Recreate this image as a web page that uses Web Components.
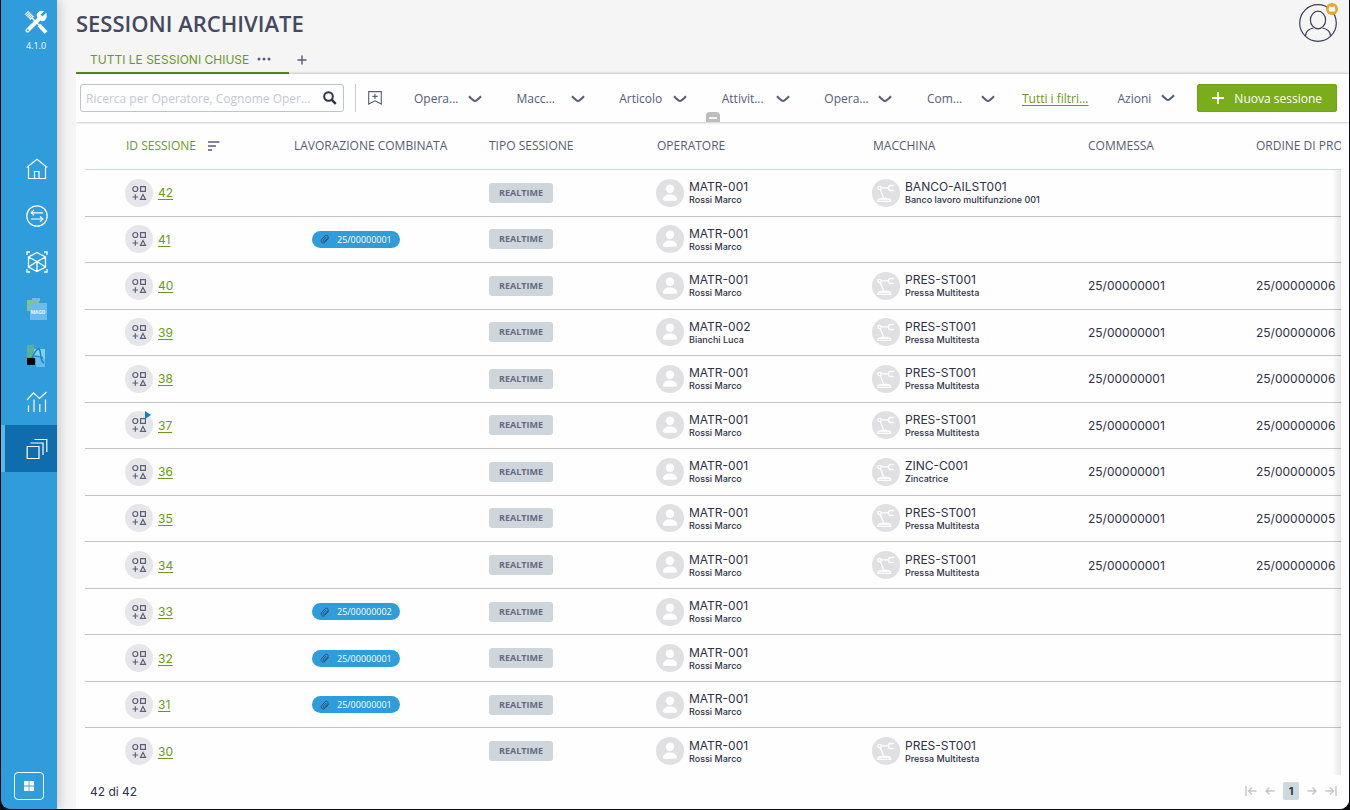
<!DOCTYPE html>
<html lang="it">
<head>
<meta charset="utf-8">
<title>Sessioni archiviate</title>
<style>
  html, body { margin: 0; height: 100%; background: #0c0c10; }
  body { font-family: "Open Sans", "Noto Sans", sans-serif; font-size: 12px; color: #4b5068;
    --green: #6a9a1b; --ink: #2e3147; --slate: #565c78; --blue: #2f9cdb; }
</style>
</head>
<body>
<session-app></session-app>
<script>
const ICONS = {
  tools: ['0 0 24 24', '<g fill="none" stroke="#fff"><path d="M3.5 20.5 15 9" stroke-width="4" stroke-linecap="round"/><path d="M22 3.5 18.5 7 16 4.500 19.500 1.500C14 .5 12.500 4 13.500 7L17 10.500c3 1 6-1 5-7z" fill="#fff" stroke-width="1"/><path d="M2.500 2.500l6 6" stroke-width="5" stroke-dasharray="1.200 .5"/><path d="M8 8l8 8" stroke-width="1.600"/><path d="M15 15l7 7.500" stroke-width="4"/></g><circle cx="3.800" cy="20.200" r="1" fill="#2f9cdb"/>'],
  home: ['0 0 22 22', '<path d="M.8 9.500 11 1.200 21.200 9.500M2.500 8.500V20.500H19.500V8.500M8.500 20.500V13.500H13V20.500" fill="none" stroke="#fff" stroke-width="1.200"/>'],
  swap: ['0 0 22 22', '<g fill="none" stroke="#fff" stroke-width="1.200"><circle cx="11" cy="11" r="10.200"/><path d="M17 7.800H5M8 5 5 7.800M5 7.800l3 2.500M5 14h12M14 11.500l3 2.500-3 2.800"/></g>'],
  cube: ['0 0 22 22', '<g fill="none" stroke="#fff" stroke-width="1.300"><path d="M1 4V1h3M18 1h3v3M1 18v3h3M18 21h3v-3M11 1.500 19.500 6V16L11 20.500 2.500 16V6ZM2.500 6 11 10.500 19.500 6M11 10.500V20.500M2.500 16 11 10.500 19.500 16"/></g>'],
  stack: ['0 0 22 22', '<g fill="none" stroke="#fff" stroke-width="1.200"><path d="M1.200 8.500H13V20.500H1.200ZM4.500 5H17V17M8.500 1.500H20.800V14"/></g>'],
  chart: ['0 0 22 22', '<path d="M1 9 7.500 1.800 13.500 7.500 20.500 1M2.500 14.500V21M8 8.500V21M13.800 13V21M19.500 8.500V21" fill="none" stroke="#fff" stroke-width="1.200"/>'],
  aLogo: ['0 0 22 22', '<path d="M1 0h7v12H1z" fill="#5fae9b"/><path d="M8 4h11v9H8z" fill="#7cd2ef"/><path d="M10 13h9v9h-9z" fill="#63bdea"/><path d="M4 14C8 13 8 4 13 4c3 3 0 11 5 14M8 11.500c3-1 6 1 9 1" fill="none" stroke="#2a7fc4" stroke-width="1.500"/><path d="M1 13h8v7H1z" fill="#000"/>'],
  win: ['0 0 10 10', '<path d="M0 0h4.600v4.600H0zM5.400 0H10v4.600H5.400zM0 5.400h4.600V10H0zM5.400 5.400H10V10H5.400z" fill="#fff"/>'],
  dots: ['0 0 14 4', '<g fill="#5a5f7c"><circle cx="2" cy="2" r="1.500"/><circle cx="7" cy="2" r="1.500"/><circle cx="12" cy="2" r="1.500"/></g>'],
  plus: ['0 0 10 10', '<path d="M5 .5v9M.5 5h9" stroke="currentColor" stroke-width="1.400" fill="none"/>'],
  add: ['0 0 12 12', '<path d="M6 0v12M0 6h12" stroke="currentColor" stroke-width="1.800" fill="none"/>'],
  search: ['0 0 14 14', '<circle cx="5.500" cy="5.500" r="4.300" fill="none" stroke="#2e3147" stroke-width="2"/><path d="M8.800 8.800 12.800 12.800" stroke="#2e3147" stroke-width="2.400"/>'],
  bookmark: ['0 0 14 14', '<path d="M.7.600H13.300V13L7 9.800.7 13ZM7 2.800V8M4.400 5.400H9.600" fill="none" stroke="#565c78" stroke-width="1.100"/>'],
  chevron: ['0 0 14 8', '<path d="M1 1.200Q5.500 6 7 6T13 1.200" fill="none" stroke="#565c78" stroke-width="2"/>'],
  sort: ['0 0 12 10', '<path d="M0 1h11.500M0 5h8M0 9h4" stroke="#565c78" stroke-width="1.600"/>'],
  shapes: ['0 0 28 28', '<circle cx="14" cy="14" r="14" fill="#e6e6ea"/><g fill="none" stroke="#5c6076" stroke-width="1.200"><circle cx="10.300" cy="10" r="2.500"/><path d="M15.600 7.600h4.800v4.800h-4.800zM10.300 15.200v5.600M7.500 18h5.600M18 15.400l2.500 4.900h-5z"/></g>'],
  user: ['0 0 28 28', '<circle cx="14" cy="14" r="14" fill="#e0e0e2"/><rect x="9.800" y="5.600" width="8.400" height="8.400" rx="4.200" fill="#fff"/><path d="M7 20.500c0-3 3-5 7-5s7 2 7 5q0 1.300-1.500 1.300h-11Q7 21.800 7 20.500z" fill="#fff"/>'],
  robot: ['0 0 28 28', '<circle cx="14" cy="14" r="14" fill="#e0e0e2"/><g fill="none" stroke="#fff" stroke-width="1.300"><circle cx="7.500" cy="9" r="1.700"/><path d="M9 8.800h7.500M8.200 10.500l3.300 8M22 6.500h-3.500q-2 0-2 2.500t2 2.500H22M9.500 19.500h6M5.800 22.300q0-2.300 2.300-2.300h8.500q2 0 2 2.300z"/></g>'],
  clip: ['0 0 10 10', '<path d="M8.800 4 5 8.300C3 10.300 0 8 1.500 5.700L5 1.800C7 .2 9 2.200 7.700 3.900L4.700 7.300C3.500 8.300 2.500 7 3.500 5.900L6.200 3" fill="none" stroke="#31506f" stroke-width="1"/>'],
  person: ['0 0 38 38', '<g fill="none" stroke="#3c3f55" stroke-width="1.200"><circle cx="19" cy="19" r="18.300"/><ellipse cx="19" cy="16" rx="7.600" ry="8.800"/><path d="M6.500 32c0-5 3.500-7 8-8M31.500 32c0-5-3.500-7-8-8"/></g>'],
  badge: ['0 0 12 12', '<circle cx="6" cy="6" r="6" fill="#eaa52c"/><rect x="2.800" y="4" width="6.400" height="4.500" rx="1" fill="#fff"/><path d="M4 3v1.500M8 3v1.500" stroke="#fff"/>'],
  play: ['0 0 6 8', '<path d="M0 0 6 4 0 8z" fill="#0e7ccb"/>'],
  first: ['0 0 12 10', '<path d="M1 0v10M11.500 5H4M7 1.500 3.500 5 7 8.500" fill="none" stroke="#c3c6cc" stroke-width="1.400"/>'],
  prev: ['0 0 12 10', '<path d="M10.500 5H2M5.500 1.500 2 5l3.500 3.500" fill="none" stroke="#c3c6cc" stroke-width="1.400"/>'],
  next: ['0 0 12 10', '<path d="M1.500 5H10M6.500 1.500 10 5 6.500 8.500" fill="none" stroke="#c3c6cc" stroke-width="1.400"/>'],
  last: ['0 0 12 10', '<path d="M11 0v10M.5 5H8M5 1.500 8.500 5 5 8.500" fill="none" stroke="#c3c6cc" stroke-width="1.400"/>'],
  handle: ['0 0 14 10', '<path d="M0 10V4q0-4 4-4h6q4 0 4 4v6z" fill="#bdbdbf"/><path d="M3 6h8" stroke="#fff" stroke-width="1.600"/>']
};

class BaseElement extends HTMLElement {
  connectedCallback() {
    if (this.shadowRoot) return;
    this.attachShadow({ mode: 'open' }).innerHTML = this.render();
  }
}

customElements.define('ui-icon', class extends BaseElement {
  render() {
    const [box, body] = ICONS[this.getAttribute('name')];
    const [, , w, h] = box.split(' ');
    return `<style>:host{display:block;flex:none}svg{display:block}</style>
      <svg width="${w}" height="${h}" viewBox="${box}" aria-hidden="true">${body}</svg>`;
  }
});

customElements.define('mago-logo', class extends BaseElement {
  render() {
    return `<style>:host{display:block}svg{display:block}text{font:700 5px Roboto,sans-serif}</style>
      <svg width="22" height="22" viewBox="0 0 22 22"><path d="M1 2h12v11H1z" fill="#84c096"/><path d="M6 0h8v3H6z" fill="#7fb8dc"/>
      <path d="M4 5h17v17H4z" fill="#6cbceb"/><text x="12" y="16" text-anchor="middle" fill="#e6f6ff">MAGO</text></svg>`;
  }
});

customElements.define('side-bar', class extends BaseElement {
  render() {
    const items = [['home', 'Home'], ['swap', 'Scambi'], ['cube', 'Articoli'], ['mago', 'Mago'], ['aLogo', 'Analisi'], ['chart', 'Statistiche'], ['stack', 'Sessioni']];
    return `<style>
      :host{display:flex;flex-direction:column;background:var(--blue);color:#fff;box-shadow:2px 0 12px rgba(0,0,0,.2);z-index:1}
      .brand{display:grid;justify-items:center;gap:6px;padding:10px 0 0 14px;height:146px;box-sizing:border-box;align-content:start;font-size:9px;line-height:12px;font-weight:500}
      nav{display:grid;grid-auto-rows:1fr;height:326px}
      a{display:flex;align-items:center;padding-left:21px;border-left:4px solid transparent}
      a[aria-current]{background:#0f6dae;border-color:#5cb8ec}
      button{margin:auto 0 9px 13px;width:30px;height:28px;padding:0;display:grid;place-items:center;background:none;border:1px solid #fff;border-radius:4px}
    </style>
    <div class="brand"><ui-icon name="tools"></ui-icon><span>4.1.0</span></div>
    <nav>${items.map(([n, l]) => `<a href="#${l}" aria-label="${l}" ${n === 'stack' ? 'aria-current="page"' : ''}>${n === 'mago' ? '<mago-logo></mago-logo>' : `<ui-icon name="${n}"></ui-icon>`}</a>`).join('')}</nav>
    <button aria-label="Applicazioni"><ui-icon name="win"></ui-icon></button>`;
  }
});

customElements.define('page-header', class extends BaseElement {
  render() {
    return `<style>
      :host{display:flex;justify-content:space-between;height:74px}
      h1{margin:8px 0 0;font-size:22px;line-height:30px;font-weight:600;color:#454960}
      .tabs{display:flex;align-items:center;margin-top:8px}
      .tab{display:flex;align-items:center;gap:8px;height:26px;padding:0 18px 0 14px;border-bottom:2px solid #5c8f14}
      a{color:var(--green);text-decoration:none;font:12px Inter,sans-serif}
      button{background:none;border:0;padding:0;color:var(--slate)}
      .add{margin-left:8px}
      .account{position:relative;margin:4px 12px 0 0;width:38px;height:38px}
      .account ui-icon+ui-icon{position:absolute;right:-1px;top:-1px}
    </style>
    <div><h1>SESSIONI ARCHIVIATE</h1>
      <div class="tabs"><div class="tab"><a href="#chiuse">TUTTI LE SESSIONI CHIUSE</a><button aria-label="Altro"><ui-icon name="dots"></ui-icon></button></div>
      <button class="add" aria-label="Aggiungi vista"><ui-icon name="plus"></ui-icon></button></div></div>
    <button class="account" aria-label="Profilo"><ui-icon name="person"></ui-icon><ui-icon name="badge"></ui-icon></button>`;
  }
});

customElements.define('filter-select', class extends BaseElement {
  render() {
    const t = this.getAttribute('label');
    return `<style>
      :host{display:flex;align-items:center;width:68px;position:relative}
      select{appearance:none;border:0;background:none;margin:0;padding:0;width:100%;height:28px;font:inherit;color:inherit}
      ui-icon{position:absolute;right:0;top:11px;pointer-events:none}
    </style><select aria-label="${t}"><option>${t}</option></select><ui-icon name="chevron"></ui-icon>`;
  }
});

customElements.define('filter-bar', class extends BaseElement {
  render() {
    return `<style>
      :host{display:flex;align-items:center;height:48px;padding:0 12px 0 4px;background:#fdfefd;position:relative;box-shadow:0 0 3px rgba(0,0,0,.35);color:var(--slate);font-size:12px;clip-path:inset(-3px 0 -3px 0)}
      .search{display:flex;align-items:center;width:264px;height:28px;box-sizing:border-box;border:1px solid #b9c8c4;border-radius:3px;padding:0 6px 0 5px;gap:8px}
      input{flex:1;min-width:0;border:0;padding:0;background:none;font:inherit;color:var(--ink);text-overflow:ellipsis}
      input::placeholder{color:#c6c6d4;opacity:1}
      button{font:inherit;color:inherit;background:none;border:0;padding:0;display:flex;align-items:center}
      .rule{width:1px;height:28px;background:#c5ced3;margin:0 12px 0 11px}
      .filters{display:flex;justify-content:space-between;flex:1;margin:0 27px 0 32px}
      a{color:var(--green);text-underline-offset:2px}
      .actions{gap:10px;margin:0 22px 0 29px}
      .new{background:#7aad1b;color:#fff;border-radius:3px;height:28px;padding:0 15px;gap:10px;box-shadow:inset 0 0 0 1px #71a316}
      .handle{position:absolute;left:50%;bottom:0;margin-left:-7px}
    </style>
    <div class="search"><input aria-label="Ricerca" placeholder="Ricerca per Operatore, Cognome Oper..."><button aria-label="Cerca"><ui-icon name="search"></ui-icon></button></div>
    <div class="rule"></div><button aria-label="Salva filtro"><ui-icon name="bookmark"></ui-icon></button>
    <div class="filters">${['Opera...', 'Macc...', 'Articolo', 'Attivit...', 'Opera...', 'Com...'].map(t => `<filter-select label="${t}"></filter-select>`).join('')}</div>
    <a href="#filtri">Tutti i filtri...</a>
    <button class="actions" aria-haspopup="menu">Azioni<ui-icon name="chevron"></ui-icon></button>
    <button class="new"><ui-icon name="add"></ui-icon>Nuova sessione</button>
    <button class="handle" aria-label="Comprimi"><ui-icon name="handle"></ui-icon></button>`;
  }
});

customElements.define('entity-cell', class extends BaseElement {
  render() {
    return `<style>
      :host{display:flex;align-items:center;gap:5px;margin-left:-1px;white-space:nowrap}
      .name{display:block;font-size:12px;line-height:15px}
      .sub{display:block;font-size:9px;line-height:12px;font-weight:500}
    </style><ui-icon name="${this.getAttribute('icon')}"></ui-icon>
    <div><span class="name"><slot></slot></span><span class="sub"><slot name="sub"></slot></span></div>`;
  }
});

customElements.define('session-id', class extends BaseElement {
  render() {
    return `<style>
      :host{display:flex;align-items:center;gap:5px;margin-left:-1px}
      span{position:relative}
      .flag{position:absolute;right:2px;top:0}
      a{color:var(--green);text-underline-offset:2px;font-size:12px}
    </style><span><ui-icon name="shapes"></ui-icon>${this.hasAttribute('flag') ? '<ui-icon class="flag" name="play"></ui-icon>' : ''}</span><a href="#sessione"><slot></slot></a>`;
  }
});

customElements.define('type-tag', class extends BaseElement {
  render() {
    return `<style>:host{display:inline-block;box-sizing:border-box;background:#ced6db;color:#656b82;font:700 9px/20px "Open Sans",sans-serif;padding:0 10px;border-radius:3px;vertical-align:middle}</style><slot></slot>`;
  }
});

customElements.define('link-pill', class extends BaseElement {
  render() {
    return `<style>:host{display:inline-flex;align-items:center;gap:7px;background:var(--blue);color:#fff;font:500 9px/17px "Open Sans",sans-serif;padding:0 8px;border-radius:9px;margin-left:18px;vertical-align:middle}</style><ui-icon name="clip"></ui-icon><slot></slot>`;
  }
});

const R = ['MATR-001', 'Rossi Marco'];
const P = ['PRES-ST001', 'Pressa Multitesta'];
const C = '25/00000001';
const ROWS = [
  [42, '', R, ['BANCO-AILST001', 'Banco lavoro multifunzione 001']],
  [41, C, R],
  [40, '', R, P, C, '25/00000006'],
  [39, '', ['MATR-002', 'Bianchi Luca'], P, C, '25/00000006'],
  [38, '', R, P, C, '25/00000006'],
  [37, '', R, P, C, '25/00000006'],
  [36, '', R, ['ZINC-C001', 'Zincatrice'], C, '25/00000005'],
  [35, '', R, P, C, '25/00000005'],
  [34, '', R, P, C, '25/00000006'],
  [33, '25/00000002', R],
  [32, C, R],
  [31, C, R],
  [30, '', R, P]
];

customElements.define('session-table', class extends BaseElement {
  render() {
    const entity = (icon, e) => e ? `<entity-cell icon="${icon}">${e[0]}<span slot="sub">${e[1]}</span></entity-cell>` : '';
    return `<style>
      :host{display:block;position:relative;overflow:hidden;margin:0 8px 0 9px}
      :host::after{content:"";position:absolute;right:0;top:48px;bottom:0;width:9px;background:linear-gradient(90deg,rgba(0,0,0,0),rgba(0,0,0,.09))}
      table{border-collapse:separate;border-spacing:0;table-layout:fixed;width:100%;min-width:1339px;height:100%;font-family:Inter,sans-serif;color:var(--ink)}
      th{height:47px;font:400 12px "Open Sans",sans-serif;color:var(--slate);text-align:left;border-bottom:1px solid #cbdadd}
      th,td{padding:0;white-space:nowrap}
      td{border-bottom:1px solid #c2c6c9}
      tr:last-child td{border-bottom-color:transparent}
      th:first-child,td:first-child{padding-left:41px}
      .sorted{display:flex;align-items:center;gap:12px;color:var(--green)}
    </style>
    <table><colgroup><col width="209"><col width="195"><col width="168"><col width="216"><col width="215"><col width="168"><col width="168"></colgroup>
    <thead><tr><th aria-sort="descending"><div class="sorted">ID SESSIONE<ui-icon name="sort"></ui-icon></div></th><th>LAVORAZIONE COMBINATA</th><th>TIPO SESSIONE</th><th>OPERATORE</th><th>MACCHINA</th><th>COMMESSA</th><th>ORDINE DI PRODUZIONE</th></tr></thead>
    <tbody>${ROWS.map(([id, comb, op, mac, com, ord]) => `<tr><td><session-id ${id === 37 ? 'flag' : ''}>${id}</session-id></td><td>${comb ? `<link-pill>${comb}</link-pill>` : ''}</td><td><type-tag>REALTIME</type-tag></td><td>${entity('user', op)}</td><td>${entity('robot', mac)}</td><td>${com || ''}</td><td>${ord || ''}</td></tr>`).join('')}</tbody></table>`;
  }
});

customElements.define('table-footer', class extends BaseElement {
  render() {
    return `<style>
      :host{display:flex;align-items:center;justify-content:space-between;height:32px;padding:0 12px 2px 14px;font-family:Inter,sans-serif;font-size:12px;color:var(--ink)}
      nav{display:flex;align-items:center;gap:7px}
      button{border:0;background:none;padding:0;font:700 11px/18px Inter,sans-serif;color:var(--ink)}
      [aria-current]{width:16px;background:#cdd9dc;border-radius:2px}
    </style><span>42 di 42</span>
    <nav aria-label="Pagine"><button aria-label="Prima"><ui-icon name="first"></ui-icon></button><button aria-label="Precedente"><ui-icon name="prev"></ui-icon></button><button aria-current="page">1</button><button aria-label="Successiva"><ui-icon name="next"></ui-icon></button><button aria-label="Ultima"><ui-icon name="last"></ui-icon></button></nav>`;
  }
});

customElements.define('session-app', class extends BaseElement {
  render() {
    return `<style>
      :host{display:grid;grid-template-columns:56px minmax(0,1fr);height:100vh;box-sizing:border-box;padding:0 1px 1px}
      side-bar{border-bottom-left-radius:9px}
      main{background:#f5f5f5;padding-left:19px;display:grid;grid-template-rows:auto minmax(0,1fr);border-bottom-right-radius:9px;overflow:hidden}
      section{background:#fdfefd;display:grid;grid-template-rows:auto minmax(0,1fr) auto;min-width:0}
    </style>
    <side-bar></side-bar>
    <main><page-header></page-header><section><filter-bar></filter-bar><session-table></session-table><table-footer></table-footer></section></main>`;
  }
});
</script>
</body>
</html>
